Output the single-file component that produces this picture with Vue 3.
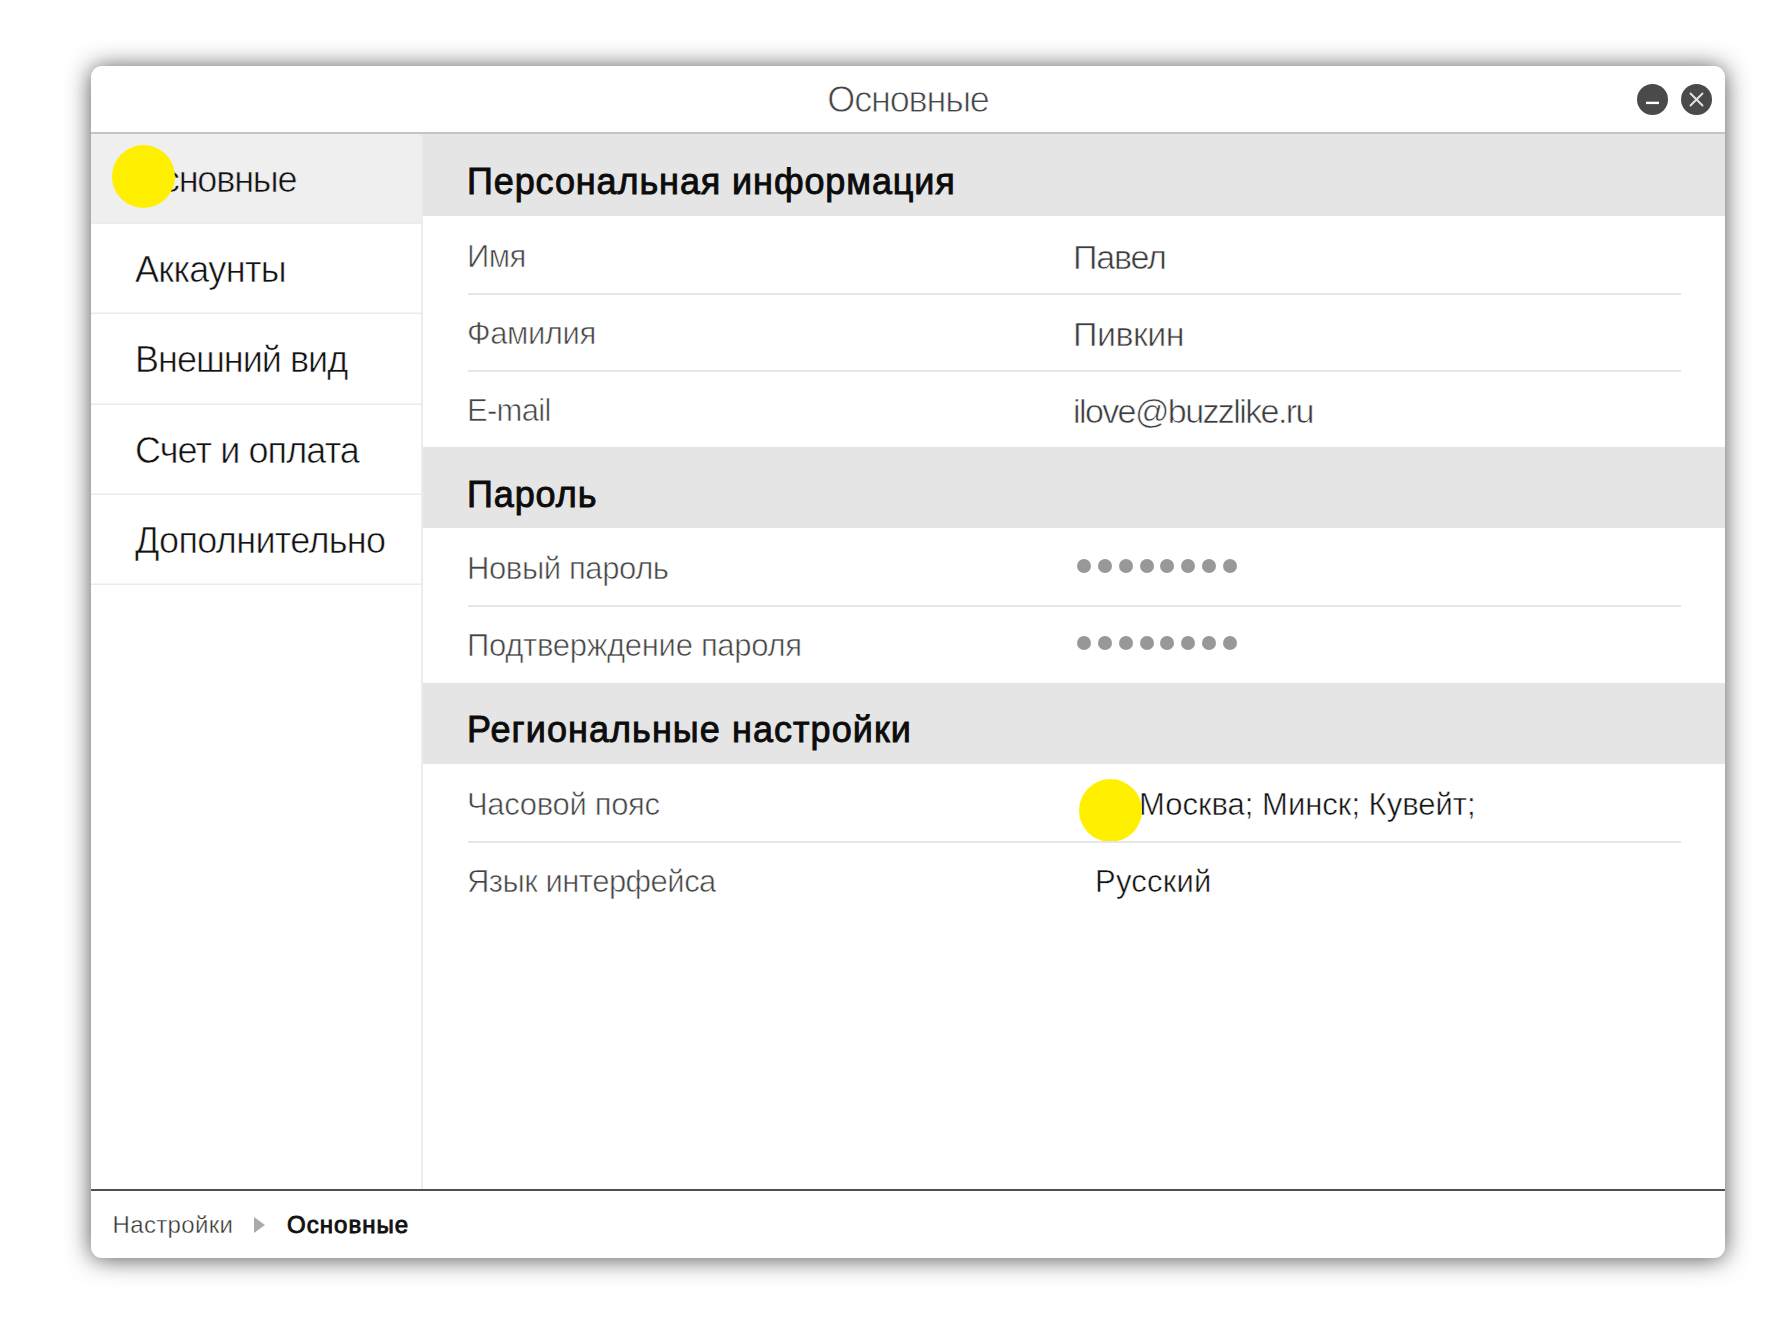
<script setup>
const menu = [
  { label: 'Основные', tracking: -1.18, active: true },
  { label: 'Аккаунты', tracking: -0.65 },
  { label: 'Внешний вид', tracking: -1 },
  { label: 'Счет и оплата', tracking: -0.9 },
  { label: 'Дополнительно', tracking: -0.67 },
]

const sections = [
  {
    title: 'Персональная информация',
    tracking: 0.9,
    rows: [
      { label: 'Имя', tracking: -0.5, value: 'Павел', valueTracking: -1.2 },
      { label: 'Фамилия', tracking: -0.4, value: 'Пивкин', valueTracking: -0.5 },
      { label: 'E-mail', tracking: -0.7, value: 'ilove@buzzlike.ru', valueTracking: -1.6 },
    ],
  },
  {
    title: 'Пароль',
    tracking: 0.9,
    rows: [
      { label: 'Новый пароль', tracking: -0.4, dots: 8 },
      { label: 'Подтверждение пароля', tracking: -0.3, dots: 8 },
    ],
  },
  {
    title: 'Региональные настройки',
    tracking: 1.06,
    rows: [
      { label: 'Часовой пояс', tracking: -0.32, option: 'Москва; Минск; Кувейт;', valueTracking: 0, marked: true },
      { label: 'Язык интерфейса', tracking: -0.52, option: 'Русский', valueTracking: 0.22 },
    ],
  },
]

const spacing = (value) => ({ letterSpacing: `${value}px` })
</script>

<template>
  <div class="page">
    <div class="window">
      <header class="titlebar">
        <h1 class="title">Основные</h1>
        <div class="controls">
          <svg class="control" viewBox="0 0 31 31">
            <circle cx="15.5" cy="15.5" r="15.5" />
            <path d="M9 18.9h13" stroke="#fff" stroke-width="2.4" />
          </svg>
          <svg class="control" viewBox="0 0 31 31">
            <circle cx="15.5" cy="15.5" r="15.5" />
            <path d="M9.5 9.5l12 12M21.5 9.5l-12 12" stroke="#e6e6e6" stroke-width="1.9" stroke-linecap="round" />
          </svg>
        </div>
      </header>

      <div class="body">
        <nav class="sidebar">
          <div v-for="item in menu" :key="item.label" class="item" :class="{ active: item.active }">
            <span :style="spacing(item.tracking)">{{ item.label }}</span>
            <i v-if="item.active" class="marker menu-marker"></i>
          </div>
        </nav>

        <main class="content">
          <section v-for="section in sections" :key="section.title">
            <h2 class="heading" :style="spacing(section.tracking)">{{ section.title }}</h2>
            <div class="rows">
              <div v-for="row in section.rows" :key="row.label" class="row">
                <span class="label" :style="spacing(row.tracking)">{{ row.label }}</span>
                <span v-if="row.value" class="value" :style="spacing(row.valueTracking)">{{ row.value }}</span>
                <span v-else-if="row.dots" class="dots"><i v-for="n in row.dots" :key="n"></i></span>
                <span v-else class="option" :class="{ shifted: row.marked }" :style="spacing(row.valueTracking)">{{ row.option }}</span>
                <i v-if="row.marked" class="marker row-marker"></i>
              </div>
            </div>
          </section>
        </main>
      </div>

      <footer class="breadcrumbs">
        <span class="crumb">Настройки</span>
        <svg class="arrow" viewBox="0 0 11 16"><path d="M0 0l11 8-11 8z" fill="#aaa" /></svg>
        <span class="current">Основные</span>
      </footer>
    </div>
  </div>
</template>

<style>
body {
  margin: 0;
  background: #fff;
}
</style>

<style scoped>
* {
  box-sizing: border-box;
}

.page {
  --surface: #fff;
  height: 1329px;
  padding: 66px 67px 0 91px;
  overflow: hidden;
  font-family: "Liberation Sans", Arial, sans-serif;
  white-space: nowrap;
}

.window {
  display: flex;
  flex-direction: column;
  height: 1192px;
  border-radius: 11px;
  background: #fff;
  box-shadow: 0 1px 24px rgba(0, 0, 0, 0.68);
}

.titlebar {
  position: relative;
  display: flex;
  align-items: center;
  justify-content: center;
  height: 68px;
  border-bottom: 2px solid #c4c4c4;
}

.title {
  margin: 0;
  padding-top: 2px;
  color: #444;
  font-size: 36px;
  font-weight: 400;
  letter-spacing: -1.18px;
  -webkit-text-stroke: 0.8px var(--surface);
}

.controls {
  position: absolute;
  top: 17.5px;
  right: 13.5px;
  display: flex;
  gap: 13px;
}

.control {
  width: 31px;
  height: 31px;
  fill: #4a4a4a;
}

.body {
  display: flex;
  flex: 1;
  min-height: 0;
}

.sidebar {
  flex: none;
  width: 332px;
  border-right: 2px solid #ececec;
}

.item {
  position: relative;
  display: flex;
  align-items: center;
  height: 90.2px;
  padding: 2px 0 0 44px;
  color: #111;
  font-size: 36px;
  box-shadow: inset 0 -1.5px #ebebeb;
  -webkit-text-stroke: 0.6px var(--surface);
}

.item.active {
  --surface: #efefef;
  background: #efefef;
}

.marker {
  position: absolute;
  width: 63px;
  height: 63px;
  border-radius: 50%;
  background: #fff000;
}

.menu-marker {
  left: 21px;
  top: 11px;
}

.content {
  flex: 1;
  padding-top: 0.5px;
  background: linear-gradient(#e5e5e5 2px, transparent 2px);
}

.heading {
  height: 81.4px;
  margin: 0;
  padding: 12.5px 0 0 44px;
  background: #e5e5e5;
  color: #0c0c0c;
  font-size: 36px;
  font-weight: 400;
  line-height: 69px;
  -webkit-text-stroke: 0.9px #0c0c0c;
}

.rows {
  padding: 0 44px 0 45px;
}

.row {
  position: relative;
  display: flex;
  height: 77.05px;
  line-height: 77px;
}

.row + .row {
  box-shadow: inset 0 2px #e5e5e5;
}

.label {
  width: 605px;
  margin-left: -1px;
  padding-top: 2px;
  color: #444;
  font-size: 31px;
  -webkit-text-stroke: 0.6px var(--surface);
}

.value {
  padding: 3px 0 0 1px;
  color: #3c3c3c;
  font-size: 34px;
  -webkit-text-stroke: 0.6px var(--surface);
}

.dots {
  display: flex;
  gap: 6.93px;
  padding: 30.5px 0 0 4.8px;
}

.dots i {
  width: 14px;
  height: 14px;
  border-radius: 50%;
  background: #989898;
}

.option {
  padding: 2px 0 0 23px;
  color: #111;
  font-size: 31px;
  -webkit-text-stroke: 0.5px var(--surface);
}

.option.shifted {
  padding-left: 67px;
}

.row-marker {
  left: 611px;
  top: 15px;
}

.breadcrumbs {
  display: flex;
  align-items: center;
  height: 69px;
  padding-left: 21.5px;
  border-top: 2px solid #4b504c;
  font-size: 24px;
}

.crumb {
  width: 141.5px;
  color: #333;
  letter-spacing: 0.35px;
  -webkit-text-stroke: 0.4px var(--surface);
}

.arrow {
  width: 11px;
  height: 16px;
  margin-right: 22px;
}

.current {
  color: #111;
  letter-spacing: 1.05px;
  -webkit-text-stroke: 0.9px #111;
}
</style>
